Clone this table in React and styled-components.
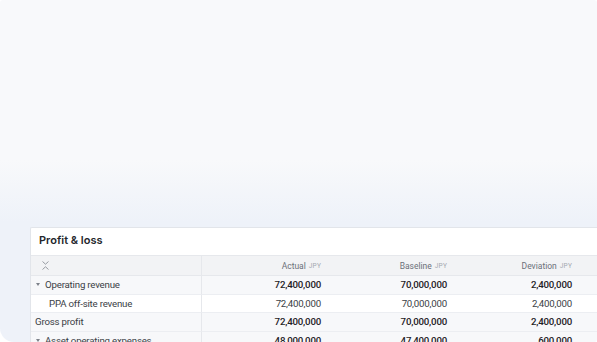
import React from "react";
import styled, { createGlobalStyle } from "styled-components";

const Global = createGlobalStyle`
  html, body { margin: 0; padding: 0; background: #ffffff; }
  body { font-family: Roboto, "Noto Sans", sans-serif; overflow: hidden; }
  * { box-sizing: border-box; }
`;

const Frame = styled.div`
  width: 597px;
  height: 342px;
  border-radius: 3px 3px 3px 14px;
  background: linear-gradient(180deg, #f8f9fb 0px, #f8f9fb 160px, #eef2f9 222px, #eef2f9 100%);
  padding: 227px 0 0 30px;
  overflow: hidden;
`;

const Card = styled.section`
  width: 620px;
  background: #ffffff;
  border: 1px solid #e2e5ea;
  border-right: none;
  border-bottom: none;
  border-radius: 2px 0 0 0;
`;

const Title = styled.h2`
  margin: 0;
  height: 28px;
  padding: 0 0 3px 8px;
  display: flex;
  align-items: center;
  font-family: Inter, Roboto, sans-serif;
  font-size: 11px;
  font-weight: 600;
  color: #23262b;
  border-bottom: 1px solid #e6e8ec;
`;

const Grid = styled.div`
  display: grid;
  grid-template-columns: 171px 126px 126px 125px 1fr;
`;

const Cell = styled.div`
  height: ${(p) => p.$h || 18.5}px;
  display: flex;
  align-items: center;
  justify-content: ${(p) => (p.$num ? "flex-end" : "flex-start")};
  padding: ${(p) => (p.$num ? "0 7px 0 0" : `0 0 0 ${p.$indent || 4}px`)};
  background: ${(p) => p.$bg};
  border-bottom: 1px solid ${(p) => p.$line || "#eceef2"};
  border-right: ${(p) => (p.$divider ? "1px solid #e6e8ec" : "none")};
  font-size: ${(p) => (p.$head ? 8.5 : 9.7)}px;
  letter-spacing: ${(p) => (p.$head ? 0 : -0.2)}px;
  font-weight: ${(p) => (p.$bold ? 500 : 400)};
  color: ${(p) => (p.$head ? "#6b7079" : p.$bold ? "#1f2226" : "#3a3e45")};
  white-space: nowrap;
  overflow: hidden;
`;

const Unit = styled.span`
  font-size: 6.5px;
  color: #a4a8af;
  margin-left: 3px;
  letter-spacing: 0.2px;
`;

const Caret = styled.span`
  display: inline-block;
  width: 0;
  height: 0;
  border-left: 2.5px solid transparent;
  border-right: 2.5px solid transparent;
  border-top: 3.5px solid #7d828a;
  margin: 0 5px 0 1px;
`;

const SortIcon = () => (
  <svg width="9" height="11" viewBox="0 0 9 11" style={{ marginLeft: 6 }}>
    <path d="M1.5 1.5 L4.5 4.2 L7.5 1.5 M1.5 9.5 L4.5 6.8 L7.5 9.5" fill="none" stroke="#8c9198" strokeWidth="0.9" />
  </svg>
);

const rows = [
  { label: "Operating revenue", caret: true, bold: true, bg: "#f7f8fa", v: ["72,400,000", "70,000,000", "2,400,000"] },
  { label: "PPA off-site revenue", indent: 18, bg: "#ffffff", v: ["72,400,000", "70,000,000", "2,400,000"] },
  { label: "Gross profit", bold: true, indent: 4, bg: "#f7f8fa", v: ["72,400,000", "70,000,000", "2,400,000"] },
  { label: "Asset operating expenses", caret: true, bold: true, bg: "#f7f8fa", v: ["48,000,000", "47,400,000", "600,000"] },
];

export default function App() {
  return (
    <>
      <Global />
      <Frame>
        <Card>
          <Title>Profit &amp; loss</Title>
          <Grid>
            <Cell $h={20} $bg="#f2f3f5" $divider $head $line="#e6e8ec">
              <SortIcon />
            </Cell>
            <Cell $h={20} $bg="#f2f3f5" $num $head $line="#e6e8ec">
              Actual<Unit>JPY</Unit>
            </Cell>
            <Cell $h={20} $bg="#f2f3f5" $num $head $line="#e6e8ec">
              Baseline<Unit>JPY</Unit>
            </Cell>
            <Cell $h={20} $bg="#f2f3f5" $num $head $line="#e6e8ec">
              Deviation<Unit>JPY</Unit>
            </Cell>
            <Cell $h={20} $bg="#f2f3f5" $head $line="#e6e8ec" />
            {rows.map((r) => (
              <React.Fragment key={r.label}>
                <Cell $bg={r.bg} $divider $indent={r.caret ? 4 : r.indent}>
                  {r.caret && <Caret />}
                  {r.label}
                </Cell>
                {r.v.map((val, i) => (
                  <Cell key={i} $bg={r.bg} $num $bold={r.bold}>
                    {val}
                  </Cell>
                ))}
                <Cell $bg={r.bg} />
              </React.Fragment>
            ))}
          </Grid>
        </Card>
      </Frame>
    </>
  );
}
